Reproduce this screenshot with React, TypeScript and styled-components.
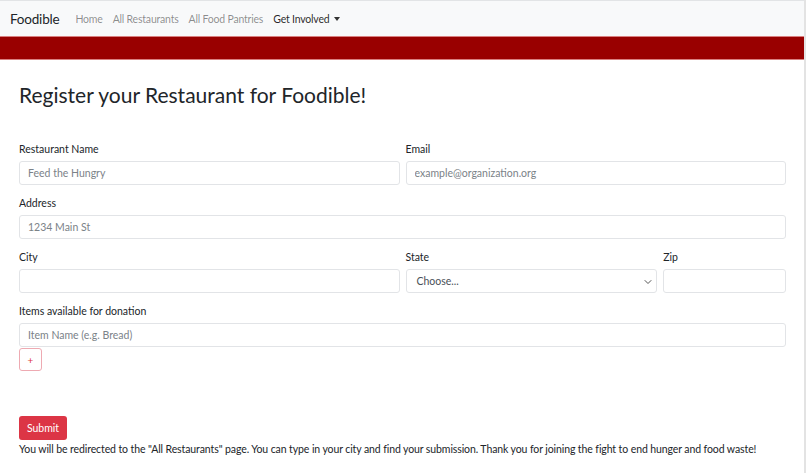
import styled, { createGlobalStyle } from "styled-components";

const GlobalStyle = createGlobalStyle`
  html, body {
    margin: 0;
    padding: 0;
    background: #fff;
  }
  body {
    font-family: Lato, "Liberation Sans", sans-serif;
    color: #212529;
  }
  * {
    box-sizing: border-box;
  }
`;

const Page = styled.div`
  width: 806px;
  min-height: 473px;
  border-right: 2px solid #e3e3e3;
`;

const Navbar = styled.nav`
  display: flex;
  align-items: center;
  height: 36px;
  padding: 0 10px;
  background: #f8f9fa;
  border-top: 1px solid #e2e4e6;
`;

const Brand = styled.span`
  font-size: 13.5px;
  letter-spacing: -0.2px;
  color: #212529;
  margin-right: 16px;
`;

const NavLinks = styled.div`
  display: flex;
  align-items: center;
  gap: 10px;
`;

const NavLink = styled.a<{ $active?: boolean }>`
  font-size: 10.5px;
  letter-spacing: -0.2px;
  color: ${(p) => (p.$active ? "rgba(0,0,0,0.85)" : "rgba(0,0,0,0.45)")};
  text-decoration: none;
  display: flex;
  align-items: center;
  gap: 5px;
`;

const Caret = styled.span`
  width: 0;
  height: 0;
  border-left: 3px solid transparent;
  border-right: 3px solid transparent;
  border-top: 4px solid #333;
`;

const Banner = styled.div`
  height: 24px;
  background: #990000;
  border-top: 1px solid #d98080;
  border-bottom: 1px solid #d98080;
`;

const Main = styled.main`
  padding: 21px 18px 0 19px;
`;

const Title = styled.h1`
  margin: 0 0 32px;
  font-size: 21px;
  font-weight: 400;
  line-height: 28px;
`;

const Grid = styled.div`
  display: grid;
  grid-template-columns: repeat(12, 1fr);
  column-gap: 6px;
`;

const Group = styled.div<{ $span: number }>`
  grid-column: span ${(p) => p.$span};
  display: flex;
  flex-direction: column;
  margin-bottom: 10px;
`;

const Label = styled.label`
  font-size: 10.5px;
  line-height: 16px;
  margin-bottom: 4px;
  color: #212529;
`;

const Input = styled.input`
  height: 24px;
  width: 100%;
  padding: 0 8px;
  font-family: inherit;
  font-size: 10.5px;
  color: #495057;
  border: 1px solid #e2e4e7;
  border-radius: 3px;
  background: #fff;
  outline: none;
  &::placeholder {
    color: #7b8288;
  }
`;

const SelectBox = styled.div`
  position: relative;
  height: 24px;
  display: flex;
  align-items: center;
  padding: 0 10px;
  font-size: 10.5px;
  color: #495057;
  border: 1px solid #e2e4e7;
  border-radius: 3px;
`;

const Chevron = styled.svg`
  position: absolute;
  right: 4px;
  top: 8px;
`;

const AddButton = styled.button`
  width: 23px;
  height: 23px;
  margin-top: 1px;
  padding: 0;
  border: 1px solid #eeaab2;
  border-radius: 3px;
  background: #fff;
  color: #dc3545;
  font-size: 10px;
  font-family: inherit;
  line-height: 1;
`;

const SubmitButton = styled.button`
  width: 48px;
  height: 24px;
  margin-top: 35px;
  padding: 0;
  border: none;
  border-radius: 3px;
  background: #dc3545;
  color: #fff;
  font-family: inherit;
  font-size: 10.5px;
`;

const Note = styled.p`
  margin: 2px 0 0;
  font-size: 10.5px;
  letter-spacing: -0.1px;
  line-height: 14px;
  color: #212529;
  white-space: nowrap;
`;

export default function App() {
  return (
    <Page>
      <GlobalStyle />
      <Navbar>
        <Brand>Foodible</Brand>
        <NavLinks>
          <NavLink>Home</NavLink>
          <NavLink>All Restaurants</NavLink>
          <NavLink>All Food Pantries</NavLink>
          <NavLink $active>
            Get Involved <Caret />
          </NavLink>
        </NavLinks>
      </Navbar>
      <Banner />
      <Main>
        <Title>Register your Restaurant for Foodible!</Title>
        <Grid>
          <Group $span={6}>
            <Label>Restaurant Name</Label>
            <Input placeholder="Feed the Hungry" />
          </Group>
          <Group $span={6}>
            <Label>Email</Label>
            <Input placeholder="example@organization.org" />
          </Group>
          <Group $span={12}>
            <Label>Address</Label>
            <Input placeholder="1234 Main St" />
          </Group>
          <Group $span={6}>
            <Label>City</Label>
            <Input />
          </Group>
          <Group $span={4}>
            <Label>State</Label>
            <SelectBox>
              Choose...
              <Chevron width="8" height="8" viewBox="0 0 16 16">
                <path d="M2 5l6 6 6-6" fill="none" stroke="#555" strokeWidth="2" strokeLinecap="round" strokeLinejoin="round" />
              </Chevron>
            </SelectBox>
          </Group>
          <Group $span={2}>
            <Label>Zip</Label>
            <Input />
          </Group>
          <Group $span={12}>
            <Label>Items available for donation</Label>
            <Input placeholder="Item Name (e.g. Bread)" />
            <div>
              <AddButton>+</AddButton>
            </div>
          </Group>
        </Grid>
        <SubmitButton>Submit</SubmitButton>
        <Note>
          You will be redirected to the "All Restaurants" page. You can type in your city and find your submission. Thank you for joining the fight to end hunger and food waste!
        </Note>
      </Main>
    </Page>
  );
}
